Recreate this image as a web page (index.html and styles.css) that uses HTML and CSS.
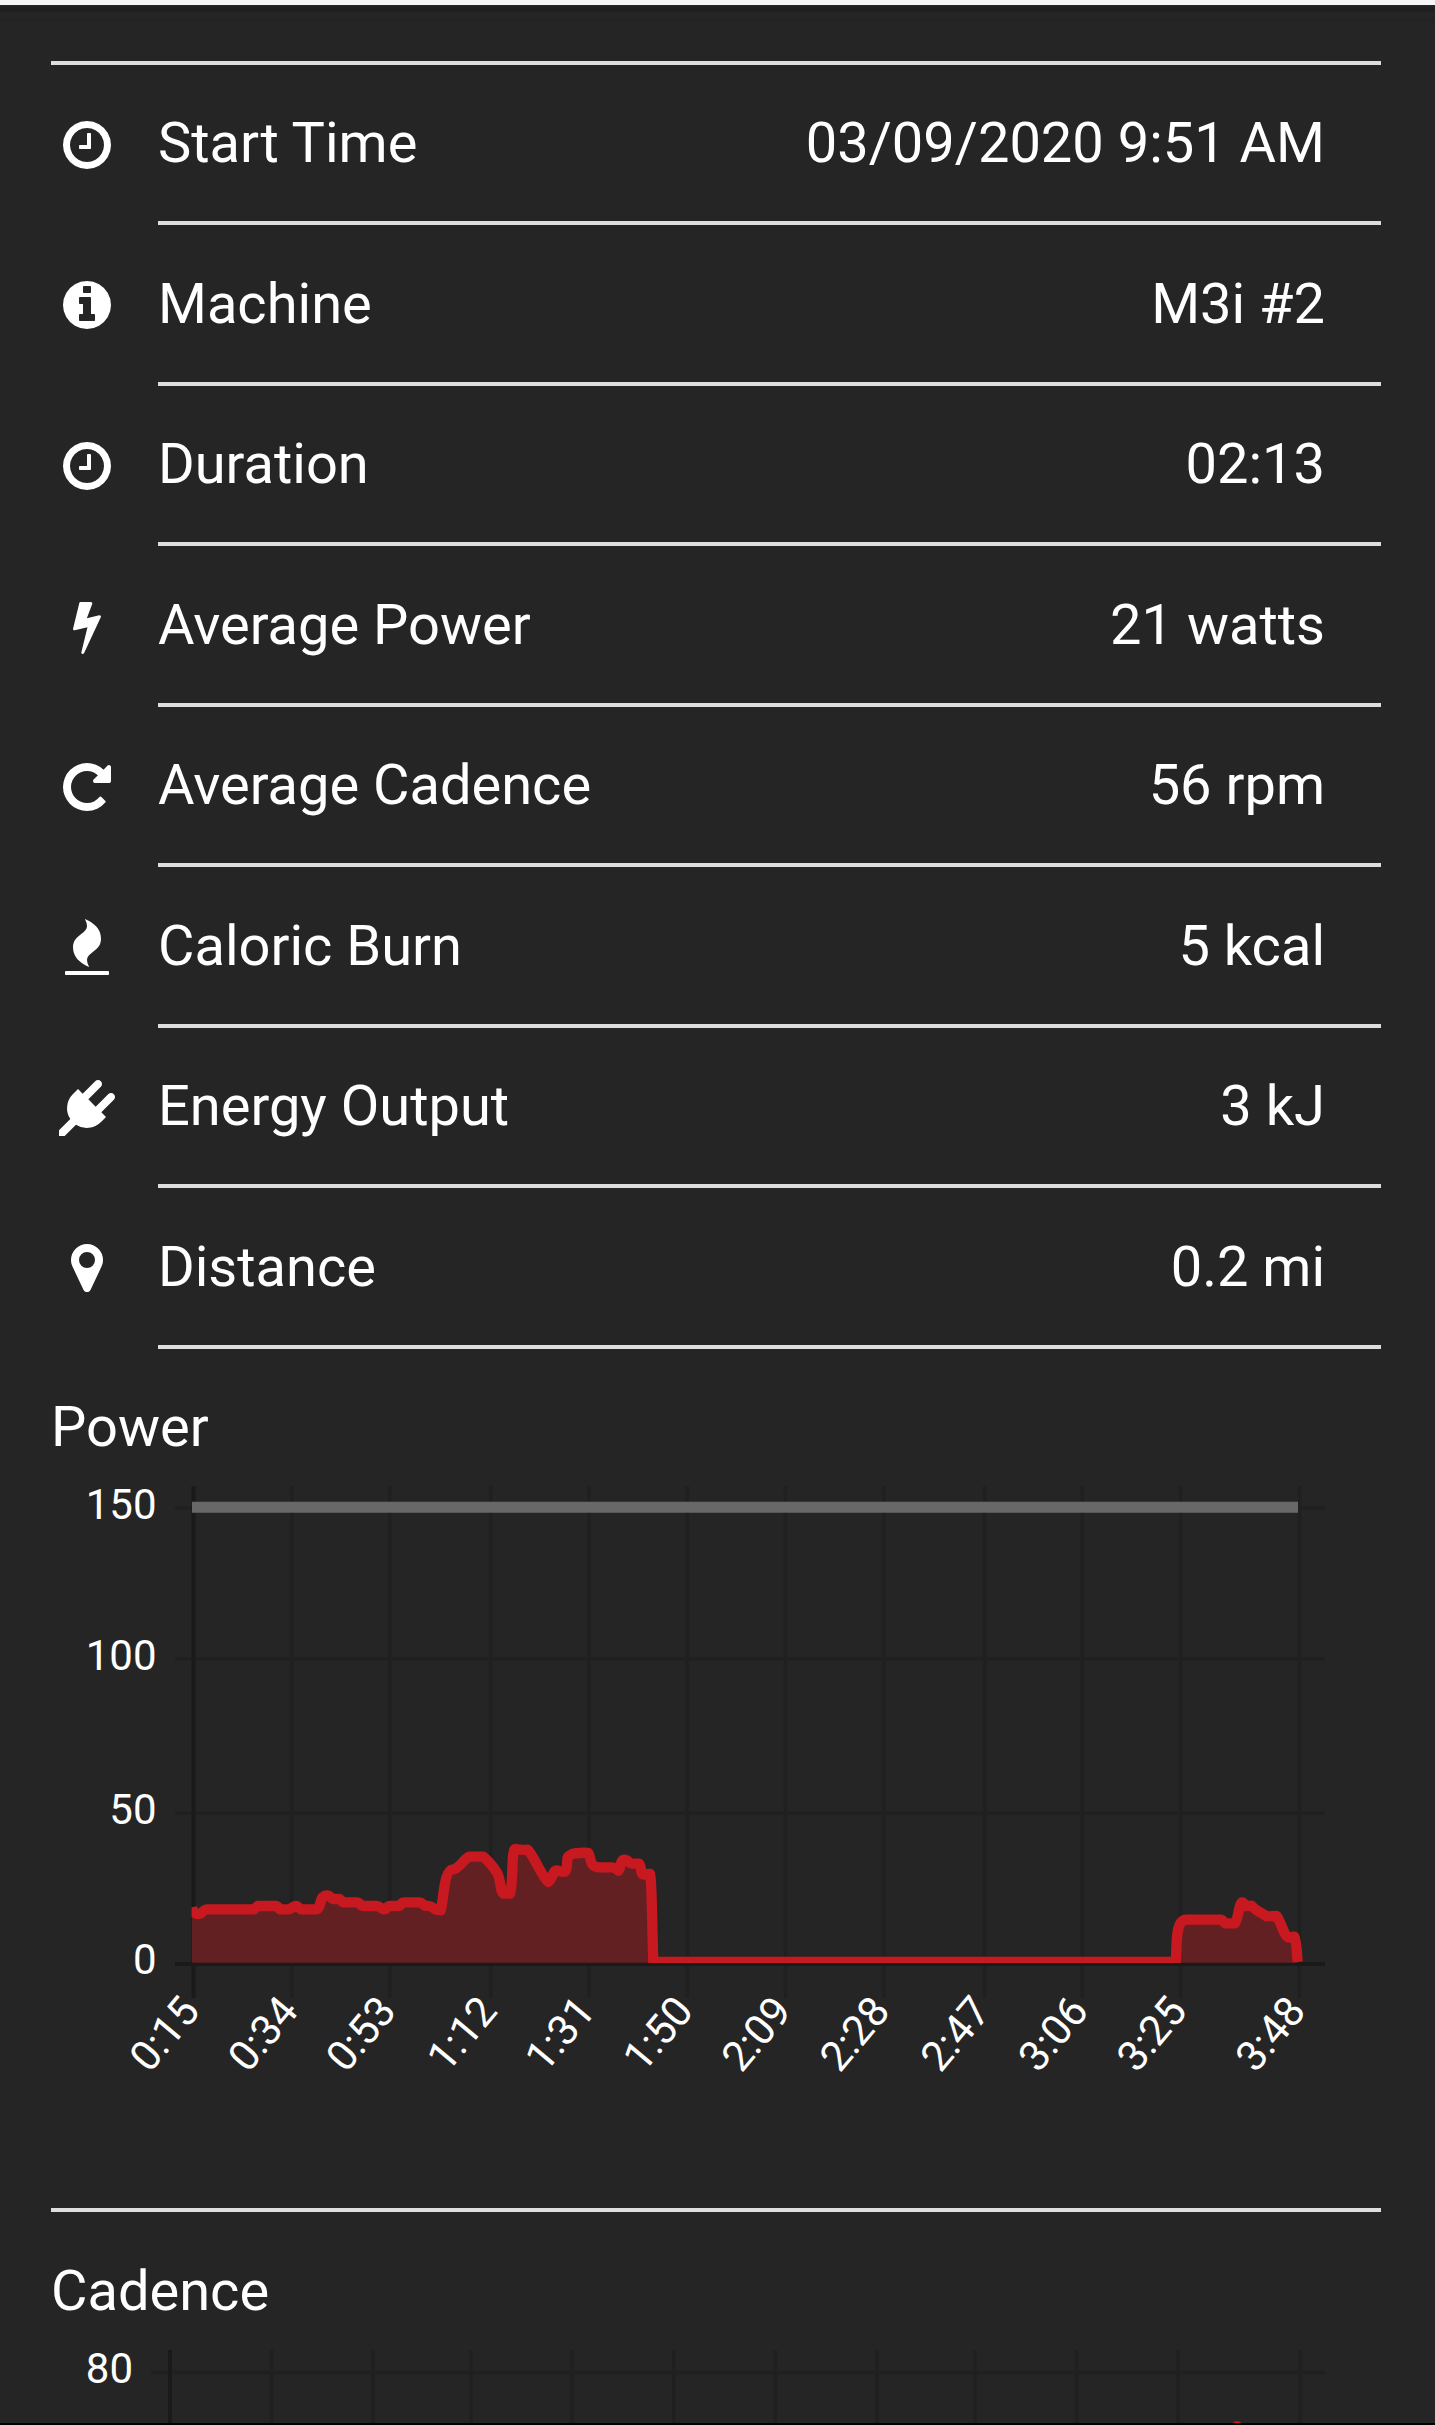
FILE: index.html
```html
<!DOCTYPE html>
<html lang="en">
<head>
<meta charset="utf-8">
<title>Workout Summary</title>
<link rel="stylesheet" href="styles.css">
</head>
<body>
<div class="topbar"></div>
<main class="content">
<ul class="stats">
<li class="stat">
<svg class="icon" viewBox="0 0 1792 1792"><path d="M1024 544v448q0 14-9 23t-23 9h-320q-14 0-23-9t-9-23v-64q0-14 9-23t23-9h224v-352q0-14 9-23t23-9h64q14 0 23 9t9 23zm416 352q0-148-73-273t-198-198-273-73-273 73-198 198-73 273 73 273 198 198 273 73 273-73 198-198 73-273zm224 0q0 209-103 385.5t-279.5 279.5-385.5 103-385.5-103-279.5-279.5-103-385.5 103-385.5 279.5-279.5 385.5-103 385.5 103 279.5 279.5 103 385.5z"/></svg>
<div class="row"><span>Start Time</span><span>03/09/2020 9:51 AM</span></div>
</li>
<li class="stat">
<svg class="icon" viewBox="0 0 1792 1792"><path d="M1152 1376v-160q0-14-9-23t-23-9h-96v-512q0-14-9-23t-23-9h-320q-14 0-23 9t-9 23v160q0 14 9 23t23 9h96v320h-96q-14 0-23 9t-9 23v160q0 14 9 23t23 9h448q14 0 23-9t9-23zm-128-896v-160q0-14-9-23t-23-9h-192q-14 0-23 9t-9 23v160q0 14 9 23t23 9h192q14 0 23-9t9-23zm640 416q0 209-103 385.5t-279.5 279.5-385.5 103-385.5-103-279.5-279.5-103-385.5 103-385.5 279.5-279.5 385.5-103 385.5 103 279.5 279.5 103 385.5z"/></svg>
<div class="row"><span>Machine</span><span>M3i #2</span></div>
</li>
<li class="stat">
<svg class="icon" viewBox="0 0 1792 1792"><path d="M1024 544v448q0 14-9 23t-23 9h-320q-14 0-23-9t-9-23v-64q0-14 9-23t23-9h224v-352q0-14 9-23t23-9h64q14 0 23 9t9 23zm416 352q0-148-73-273t-198-198-273-73-273 73-198 198-73 273 73 273 198 198 273 73 273-73 198-198 73-273zm224 0q0 209-103 385.5t-279.5 279.5-385.5 103-385.5-103-279.5-279.5-103-385.5 103-385.5 279.5-279.5 385.5-103 385.5 103 279.5 279.5 103 385.5z"/></svg>
<div class="row"><span>Duration</span><span>02:13</span></div>
</li>
<li class="stat">
<svg class="icon" viewBox="0 0 1792 1792"><path d="M1333 566q18 20 7 44l-540 1157q-13 25-42 25-4 0-14-2-17-5-25.5-19t-4.5-30l197-808-406 101q-4 1-12 1-18 0-31-11-18-15-13-39l201-825q4-14 16-23t28-9h328q19 0 32 12.5t13 29.5q0 8-5 18l-171 463 396-98q8-2 12-2 19 0 34 15z"/></svg>
<div class="row"><span>Average Power</span><span>21 watts</span></div>
</li>
<li class="stat">
<svg class="icon" viewBox="0 0 1792 1792"><path d="M1664 256v448q0 26-19 45t-45 19h-448q-42 0-59-40-17-39 14-69l138-138q-148-137-349-137-104 0-198.5 40.5t-163.5 109.5-109.5 163.5-40.5 198.5 40.5 198.5 109.5 163.5 163.5 109.5 198.5 40.5q119 0 225-52t179-147q7-10 23-12 15 0 25 9l137 138q9 8 9.5 20.5t-7.5 22.5q-109 132-264 204.5t-327 72.5q-156 0-298-61t-245-164-164-245-61-298 61-298 164-245 245-164 298-61q147 0 284.5 55.5t244.5 156.5l130-129q29-31 70-14 39 17 39 59z"/></svg>
<div class="row"><span>Average Cadence</span><span>56 rpm</span></div>
</li>
<li class="stat">
<svg class="icon" viewBox="0 0 1792 1792"><path d="M1600 1696v64q0 13-9.5 22.5t-22.5 9.5h-1344q-13 0-22.5-9.5t-9.5-22.5v-64q0-13 9.5-22.5t22.5-9.5h1344q13 0 22.5 9.5t9.5 22.5zm-256-1056q0 78-24.5 144t-64 112.5-87.5 88-96 77.5-87.5 72-64 81.5-24.5 96.5q0 96 67 224l-4-1 1 1q-90-41-160-83t-138.5-100-113.5-122.5-72.5-150.5-27.5-184q0-78 24.5-144t64-112.5 87.5-88 96-77.5 87.5-72 64-81.5 24.5-96.5q0-94-66-224l3 1-1-1q90 41 160 83t138.5 100 113.5 122.5 72.5 150.5 27.5 184z"/></svg>
<div class="row"><span>Caloric Burn</span><span>5 kcal</span></div>
</li>
<li class="stat">
<svg class="icon" viewBox="0 0 1792 1792"><path d="M1755 453q37 38 37 90.5t-37 90.5l-401 400 150 150-160 160q-163 163-389.5 186.5t-411.5-100.5l-362 362h-181v-181l362-362q-124-185-100.5-411.5t186.5-389.5l160-160 150 150 400-401q38-37 91-37t90 37 37 90.5-37 90.5l-400 401 234 234 401-400q38-37 91-37t90 37z"/></svg>
<div class="row"><span>Energy Output</span><span>3 kJ</span></div>
</li>
<li class="stat">
<svg class="icon" viewBox="0 0 1792 1792"><path d="M1152 640q0-106-75-181t-181-75-181 75-75 181 75 181 181 75 181-75 75-181zm256 0q0 109-33 179l-364 774q-16 33-47.5 52t-67.5 19-67.5-19-46.5-52l-365-774q-33-70-33-179 0-212 150-362t362-150 362 150 150 362z"/></svg>
<div class="row"><span>Distance</span><span>0.2 mi</span></div>
</li>
</ul>

<section class="panel">
<h2 class="title">Power</h2>
<svg class="chart power-chart" viewBox="51 1480 1330 728">
<defs><clipPath id="plot"><rect x="191.5" y="1486" width="1112" height="477"/></clipPath></defs>
<path class="grid" d="M291.7 1486V1998M389.7 1486V1998M490.7 1486V1998M589 1486V1998M687.3 1486V1998M785.5 1486V1998M883.7 1486V1998M984.5 1486V1998M1082.3 1486V1998M1180.7 1486V1998M1299.5 1486V1998M175 1508H1325M175 1658.7H1325M175 1813.3H1325"/>
<path class="axis" d="M193.5 1486V1998M175 1964H1325"/>
<path class="target" d="M192 1507.3H1298"/>
<g clip-path="url(#plot)"><g transform="translate(400 1780) scale(.33333)">
<path class="area" d="M-624 382L-605 402L-578 388H-440L-425 378H-372L-358 388H-335L-312 378L-295 388H-252L-240 365L-218 346L-200 357H-183L-168 367H-130L-108 378H-70L-47 388L-30 378H-5L12 367H60L78 378L92 380L122 391L145 290L160 268L175 262L208 230H250L275 257L297 285L310 325L320 341H330L337 310L341 220L345 207L383 209L420 268L445 306L470 271L495 275L508 230L525 220L565 218L572 245L600 262H635L655 272L668 240L697 251H717L722 270L735 285L750 282L755 310L760 546H2327L2330 480L2337 440L2360 419H2465L2475 430H2505L2518 385L2527 367L2540 380L2555 377L2600 408H2630L2665 472L2683 470L2690 500L2693 548H-624Z"/>
<path class="line" d="M-624 382Q-620 402-605 402C-592 402-592 388-578 388H-440C-433 388-432 378-425 378H-372C-366 378-364 388-358 388H-335C-326 388-322 378-312 378C-304 378-303 388-295 388H-252C-234 388-246 346-218 346C-208 346-208 357-200 357H-183C-177 357-175 367-168 367H-130C-118 367-120 378-108 378H-70C-60 378-57 388-47 388C-38 388-40 378-30 378H-5C4 378 2 367 12 367H60C68 367 70 378 78 378Q90 376 100 384Q110 391 122 391C132 360 130 268 160 268C180 264 192 236 208 230H250Q275 252 291 278C304 300 300 341 312 341H330C340 315 334 207 345 207Q365 211 383 209C402 228 425 290 445 306C456 302 458 271 470 271Q483 276 495 275C508 260 494 231 510 226Q520 219 530 220Q545 217 565 219C574 232 566 262 600 262H635Q645 262 655 272C665 265 658 240 672 239C686 238 686 251 697 251H717C725 255 720 283 731 284L750 282C756 300 755 400 760 546H2287L2327 546C2332 500 2323 419 2360 419H2463C2469 419 2471 430 2478 430H2505C2514 423 2516 370 2527 367C2534 368 2532 380 2540 378L2555 377C2564 392 2590 400 2600 409L2630 408C2642 423 2653 470 2665 472L2683 470C2690 483 2691 525 2693 546"/>
</g></g>
<g class="labels">
<text x="156.5" y="1518.7">150</text><text x="156.5" y="1669.7">100</text><text x="156.5" y="1824">50</text><text x="156.5" y="1973.7">0</text>
<text transform="translate(201.5 2012) rotate(-50)">0:15</text>
<text transform="translate(300 2012) rotate(-50)">0:34</text>
<text transform="translate(398 2012) rotate(-50)">0:53</text>
<text transform="translate(499 2012) rotate(-50)">1:12</text>
<text transform="translate(597 2012) rotate(-50)">1:31</text>
<text transform="translate(695 2012) rotate(-50)">1:50</text>
<text transform="translate(793.5 2012) rotate(-50)">2:09</text>
<text transform="translate(891.7 2012) rotate(-50)">2:28</text>
<text transform="translate(992.5 2012) rotate(-50)">2:47</text>
<text transform="translate(1090.3 2012) rotate(-50)">3:06</text>
<text transform="translate(1188.7 2012) rotate(-50)">3:25</text>
<text transform="translate(1307.5 2012) rotate(-50)">3:48</text>
</g>
</svg>
</section>

<section class="panel panel-last">
<h2 class="title">Cadence</h2>
<svg class="chart cadence-chart" viewBox="51 2345 1330 78">
<path class="grid" d="M271.7 2350V2423M373 2350V2423M471 2350V2423M572 2350V2423M673.7 2350V2423M775.3 2350V2423M877 2350V2423M975 2350V2423M1076.5 2350V2423M1178 2350V2423M1300.3 2350V2423M151 2372.5H1325"/>
<path class="axis" d="M170 2350V2423"/>
<circle class="peak" cx="1237" cy="2427" r="6"/>
<g class="labels"><text x="133" y="2383">80</text></g>
</svg>
</section>
</main>
<div class="bottom-edge"></div>
</body>
</html>
```
FILE: styles.css
```css
* {
  box-sizing: border-box;
}

body {
  margin: 0;
  height: 2425px;
  overflow: hidden;
  background: #252525;
  color: #fff;
  font-family: Roboto, "Liberation Sans", sans-serif;
  font-size: 56px;
  line-height: 66px;
}

.topbar {
  height: 5px;
  background: #f7f7f7;
  box-shadow: 0 7px 0 #202020, 0 17px 0 #232323;
}

.content {
  padding: 55.5px 54px 0 51px;
}

.stats {
  margin: 0;
  padding: 0;
  list-style: none;
  border-top: 4px solid #dedede;
}

.stat {
  display: flex;
  height: 160.5px;
}

.icon {
  flex: none;
  width: 56px;
  height: 56px;
  margin: 52.4px 43px 0 8px;
  fill: #fff;
}

.row {
  flex: 1;
  display: flex;
  justify-content: space-between;
  align-items: center;
  padding: 1px 56px 0 0;
  border-bottom: 4px solid #dedede;
  white-space: nowrap;
}

.panel {
  border-bottom: 4px solid #dedede;
}

.panel-last {
  border-bottom: 0;
}

.title {
  margin: 0;
  padding: 45px 0 20.5px;
  font-size: 56px;
  font-weight: 400;
}

.panel-last .title {
  padding: 46px 0 21px;
}

.chart {
  display: block;
  width: 1330px;
}

.power-chart {
  height: 728px;
}

.cadence-chart {
  height: 78px;
}

.grid {
  fill: none;
  stroke: #202020;
  stroke-width: 3.5px;
}

.axis {
  fill: none;
  stroke: #1a1a1a;
  stroke-width: 4px;
}

.target {
  stroke: #686868;
  stroke-width: 11px;
}

.area {
  fill: #632022;
}

.line {
  fill: none;
  stroke: #c7191f;
  stroke-width: 31px;
  stroke-linejoin: round;
}

.peak {
  fill: #c7191f;
}

.labels {
  fill: #fff;
  font-size: 42px;
  text-anchor: end;
}

.bottom-edge {
  height: 2px;
  background: #000;
}
```
